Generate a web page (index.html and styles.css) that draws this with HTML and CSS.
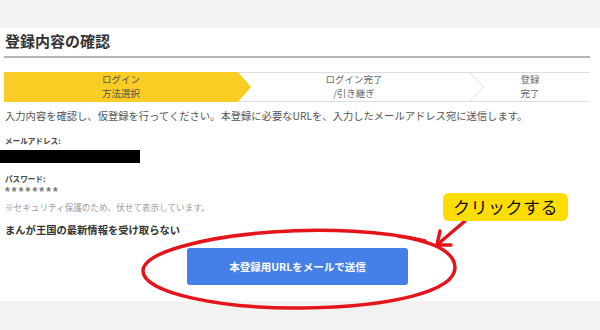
FILE: index.html
```html
<!DOCTYPE html>
<html lang="ja">
<head>
<meta charset="utf-8">
<link rel="stylesheet" href="styles.css">
</head>
<body>
<div class="page">
  <div class="topband"></div>
  <main class="panel">
    <h1 class="title">登録内容の確認</h1>
    <hr class="rule">
    <div class="steps">
      <div class="step step-active">ログイン<br>方法選択</div>
      <div class="step step-mid">ログイン完了<br>/引き継ぎ
        <svg class="chev" width="18" height="30" viewBox="0 0 18 30"><polyline points="1,0 16,15 1,30" fill="none" stroke="#dcdcdc" stroke-width="1"/></svg>
      </div>
      <div class="step">登録<br>完了</div>
    </div>
    <p class="lead">入力内容を確認し、仮登録を行ってください。本登録に必要なURLを、入力したメールアドレス宛に送信します。</p>
    <div class="label label-email">メールアドレス:</div>
    <div class="redacted"></div>
    <div class="label label-pass">パスワード:</div>
    <div class="stars">********</div>
    <div class="note">※セキュリティ保護のため、伏せて表示しています。</div>
    <div class="optout">まんが王国の最新情報を受け取らない</div>
    <button class="submit">本登録用URLをメールで送信</button>
  </main>
  <div class="bottomband"></div>

  <svg class="annot" width="600" height="330" viewBox="0 0 600 330">
    <path d="M 425 241 C 385 231, 325 228, 272 232 C 205 237, 143 252, 143 271 C 143 293, 222 309, 302 308 C 392 307, 456 291, 455 267 C 454 250, 430 241, 398 236" fill="none" stroke="#e5141b" stroke-width="3.5" stroke-linecap="round"/>
    <line x1="465" y1="221" x2="438" y2="244" stroke="#e5141b" stroke-width="3.5" stroke-linecap="round"/>
    <polyline points="440,231 437,245 451,245" fill="none" stroke="#e5141b" stroke-width="3.5" stroke-linecap="round" stroke-linejoin="round"/>
  </svg>
  <div class="callout">クリックする</div>
</div>
</body>
</html>
```

FILE: styles.css
```css
* { box-sizing: border-box; }
html, body { margin: 0; padding: 0; }
body {
  background: #f2f2f2;
  font-family: "Noto Sans CJK JP", "Noto Sans", sans-serif;
  color: #555;
}
.page {
  position: relative;
  width: 600px;
  height: 330px;
  overflow: hidden;
}
.topband { height: 28px; background: #f2f2f2; }
.bottomband { height: 29px; background: #f2f2f2; }
.panel {
  background: #fff;
  height: 273px;
  padding: 3px 0 0 5px;
  display: flex;
  flex-direction: column;
  align-items: flex-start;
}
.title {
  margin: 0;
  font-size: 15px;
  line-height: 20px;
  font-weight: 700;
  color: #333;
}
.rule {
  margin: 5px 0 0 -1px;
  width: 586px;
  border: 0;
  height: 2px;
  background: #b4b4b4;
}
.steps {
  margin: 14px 0 0 -1px;
  width: 586px;
  height: 30px;
  display: grid;
  grid-template-columns: 234px 232px 120px;
  border-top: 1px solid #dedede;
  border-bottom: 1px solid #dedede;
}
.step {
  position: relative;
  display: flex;
  align-items: center;
  justify-content: center;
  text-align: center;
  font-size: 9.5px;
  line-height: 13.8px;
  color: #666;
}
.step-active {
  background: #f9cd24;
  margin: -1px 0;
  color: #555;
}
.step-active::after {
  content: "";
  position: absolute;
  top: 0;
  right: -13px;
  width: 13px;
  height: 100%;
  background: #f9cd24;
  clip-path: polygon(0 0, 100% 50%, 0 100%);
}
.chev {
  position: absolute;
  right: -16px;
  top: 0;
  height: 100%;
}
.lead {
  margin: 7px 0 0;
  font-size: 10.3px;
  line-height: 14px;
  color: #555;
  white-space: nowrap;
}
.label {
  font-size: 7.6px;
  line-height: 12px;
  font-weight: 700;
  color: #444;
}
.label-email { margin-top: 12px; }
.redacted {
  margin: 3px 0 0 -5px;
  width: 140px;
  height: 13px;
  background: #000;
}
.label-pass { margin-top: 10px; }
.stars {
  margin-top: 2px;
  font-family: "Liberation Sans", sans-serif;
  font-size: 12px;
  line-height: 10px;
  height: 10px;
  letter-spacing: 2.2px;
  color: #777;
  font-weight: 700;
}
.note {
  margin-top: 4px;
  font-size: 8.6px;
  line-height: 12px;
  color: #999;
}
.optout {
  margin-top: 10px;
  font-size: 10.3px;
  line-height: 14px;
  font-weight: 700;
  color: #333;
}
.submit {
  margin: 11px 0 0 182px;
  width: 221px;
  height: 37px;
  border: 0;
  border-radius: 3px;
  background: #4580e8;
  color: #fff;
  font-family: "Noto Sans CJK JP", sans-serif;
  font-size: 10.5px;
  font-weight: 700;
  padding: 0;
}
.annot {
  position: absolute;
  left: 0;
  top: 0;
  pointer-events: none;
}
.callout {
  position: absolute;
  left: 443px;
  top: 193px;
  width: 125px;
  height: 28px;
  border-radius: 6px;
  background: #ffdd00;
  color: #111;
  font-size: 17px;
  line-height: 28px;
  text-align: center;
  letter-spacing: 0.5px;
}
```
